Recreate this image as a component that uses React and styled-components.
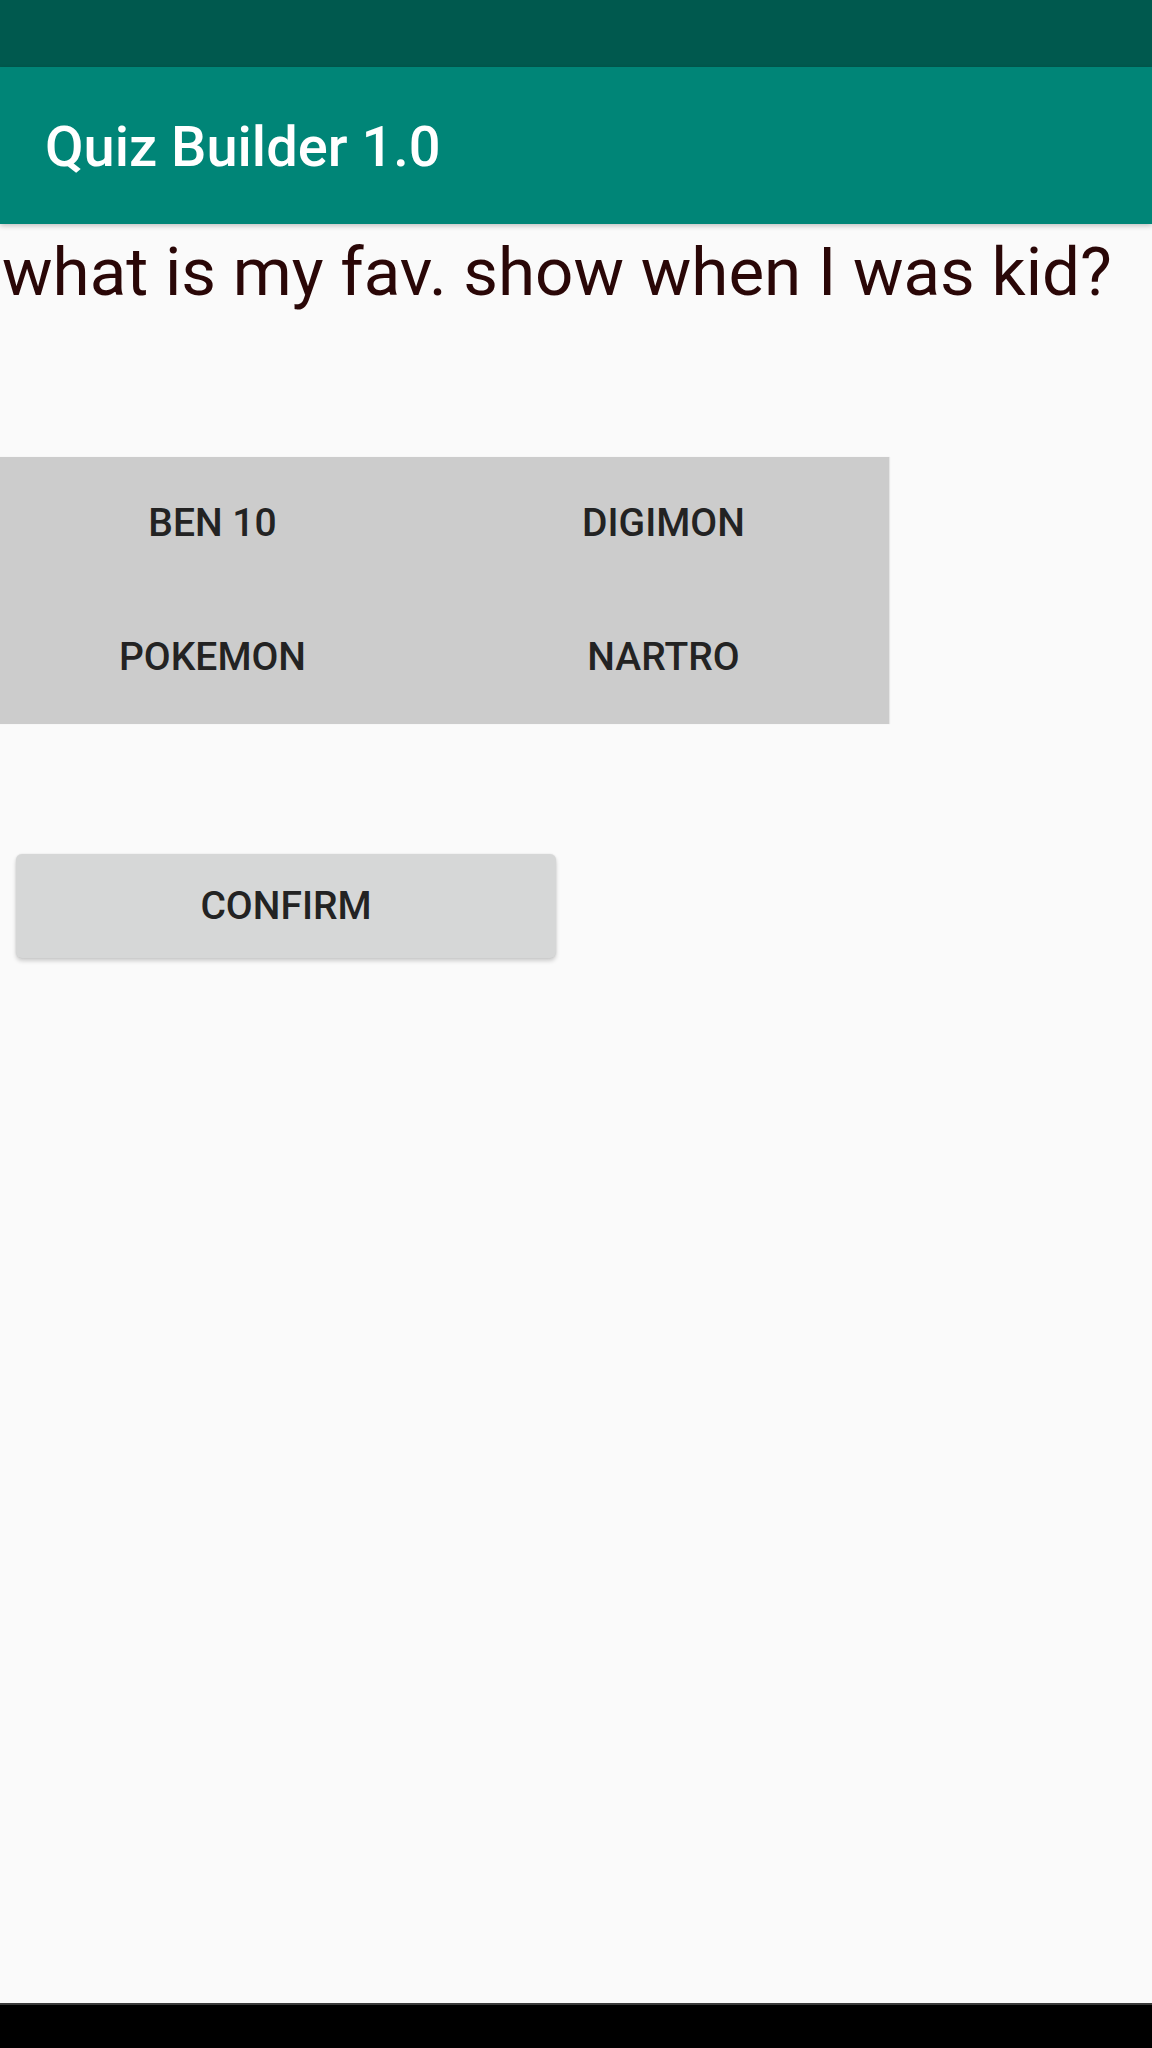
import React from "react";
import styled, { createGlobalStyle } from "styled-components";

const GlobalStyle = createGlobalStyle`
  html, body {
    margin: 0;
    padding: 0;
    background: #fafafa;
  }
  body {
    font-family: Roboto, "Noto Sans", "Liberation Sans", sans-serif;
  }
`;

export default function App() {
  const answers = ["BEN 10", "DIGIMON", "POKEMON", "NARTRO"];
  return (
    <Screen>
      <GlobalStyle />
      <StatusBar />
      <AppBar>
        <Title>Quiz Builder 1.0</Title>
      </AppBar>
      <Content>
        <Question>what is my fav. show when I was kid?</Question>
        <AnswerGrid>
          {answers.map((answer) => (
            <AnswerButton key={answer}>{answer}</AnswerButton>
          ))}
        </AnswerGrid>
        <ConfirmButton>CONFIRM</ConfirmButton>
      </Content>
      <NavBar />
    </Screen>
  );
}

const Screen = styled.div`
  display: flex;
  flex-direction: column;
  width: 1152px;
  height: 2048px;
  overflow: hidden;
  background: #fafafa;
`;

const StatusBar = styled.div`
  height: 67px;
  flex-shrink: 0;
  background: #00594e;
`;

const AppBar = styled.header`
  height: 157px;
  flex-shrink: 0;
  display: flex;
  align-items: center;
  padding-left: 45px;
  background: #008577;
  box-shadow: 0 2px 5px rgba(0, 0, 0, 0.22);
  position: relative;
  z-index: 1;
`;

const Title = styled.h1`
  margin: 0;
  padding-top: 2px;
  font-family: Roboto, sans-serif;
  font-size: 56px;
  font-weight: 500;
  color: #ffffff;
`;

const Content = styled.main`
  flex: 1;
  display: flex;
  flex-direction: column;
  align-items: flex-start;
  padding-top: 9px;
`;

const Question = styled.p`
  margin: 0 0 0 2px;
  font-family: Roboto, sans-serif;
  font-size: 67.3px;
  font-weight: 400;
  line-height: 78.5px;
  color: #2a0707;
  white-space: nowrap;
`;

const AnswerGrid = styled.div`
  display: grid;
  grid-template-columns: 451px 451px;
  grid-auto-rows: 133.5px;
  margin: 145px 0 0 -13px;
  background: #cccccc;
  box-shadow: 1px 0 1px rgba(0, 0, 0, 0.08);
`;

const AnswerButton = styled.button`
  border: none;
  background: transparent;
  display: flex;
  align-items: center;
  justify-content: center;
  font-family: Roboto, sans-serif;
  font-size: 39px;
  font-weight: 500;
  color: #232323;
  padding: 0;
`;

const ConfirmButton = styled.button`
  margin: 130px 0 0 16px;
  width: 540px;
  height: 104px;
  border: none;
  border-radius: 6px;
  background: #d6d7d7;
  box-shadow: 0 3px 4px rgba(0, 0, 0, 0.18), 0 0 2px rgba(0, 0, 0, 0.1);
  font-family: Roboto, sans-serif;
  font-size: 39px;
  font-weight: 500;
  color: #232323;
  padding: 0;
`;

const NavBar = styled.footer`
  height: 45px;
  flex-shrink: 0;
  background: #000000;
  border-top: 2px solid #3a3a3a;
  box-sizing: border-box;
`;
